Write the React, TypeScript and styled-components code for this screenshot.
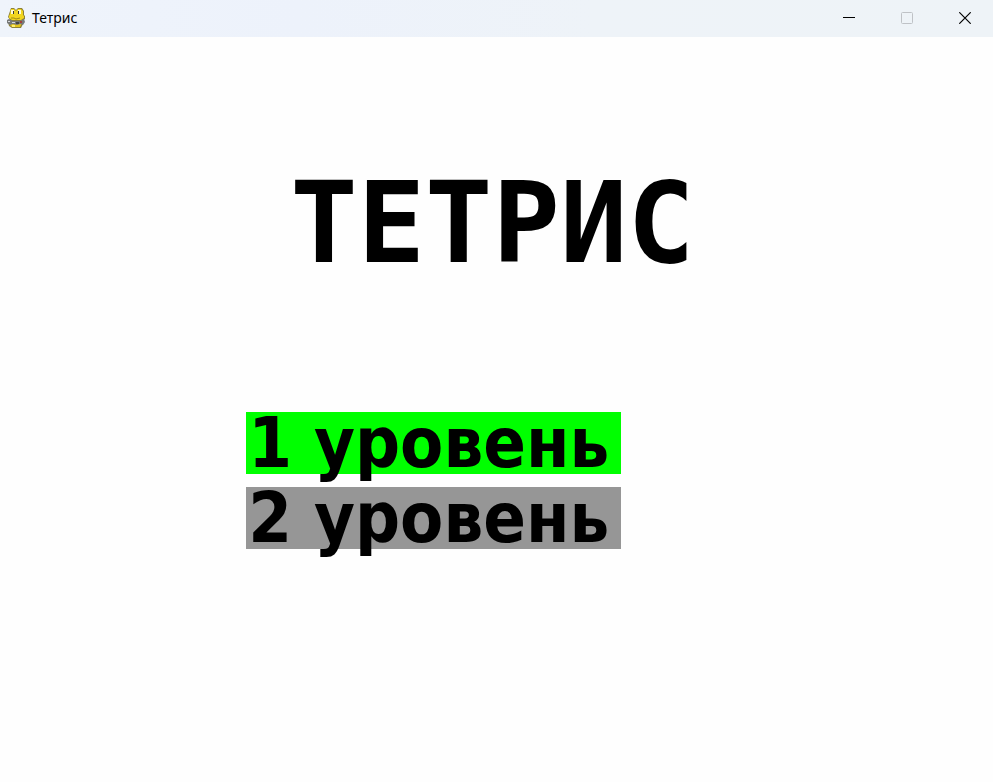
import React from "react";
import styled, { createGlobalStyle } from "styled-components";

const GlobalStyle = createGlobalStyle`
  *, *::before, *::after { box-sizing: border-box; }
  html, body { margin: 0; background: #fefefe; }
`;

const AppWindow = styled.div`
  display: flex;
  flex-direction: column;
  min-height: 100vh;
  background: #fefefe;
  color: #000;
`;

const TitleBar = styled.header`
  display: flex;
  align-items: center;
  height: 37px;
  padding: 0 0 2px 6px;
  background: linear-gradient(90deg, #eff4fb 0%, #edf2fb 30%, #eef3f8 60%, #eef3f7 100%);
`;

const WindowName = styled.span`
  flex: 1;
  padding-left: 6px;
  font: 14px/20px "Noto Sans", "Open Sans", sans-serif;
`;

const WindowControls = styled.div`
  display: flex;
`;

const WindowButton = styled.button`
  display: flex;
  align-items: center;
  justify-content: center;
  width: 58px;
  height: 35px;
  padding: 0 0 0 2px;
  border: 0;
  background: transparent;
  color: #000;

  &:disabled { color: #bfc2c6; }
  &:not(:disabled):hover { background: #dde3e9; }
`;

const Menu = styled.main`
  display: flex;
  flex-direction: column;
  padding-top: 122px;
`;

const GameTitle = styled.h1`
  margin: 0;
  padding-right: 8px;
  text-align: center;
  font: bold 112px/128px "DejaVu Sans Mono", monospace;
`;

const Levels = styled.nav`
  display: flex;
  flex-direction: column;
  align-items: flex-start;
  gap: 13px;
  margin: 125px 0 0 24.8%;
`;

const LevelButton = styled.button<{ $color: string }>`
  width: 375px;
  height: 62px;
  padding: 0 0 0 2px;
  border: 0;
  background: ${({ $color }) => $color};
  color: #000;
  text-align: left;
  white-space: nowrap;
  font: bold 70px/62px "DejaVu Sans Condensed", "DejaVu Sans", sans-serif;
  cursor: pointer;
`;

const SnakeIcon = () => (
  <svg width="20" height="22" viewBox="0 0 20 22" aria-hidden="true">
    <path d="M5 1h3l2 2 2-2h4l2 3v4l1 1v3l-3 2 1 3-2 4H6l-3-2-1-4 2-2-2-3 1-3z" fill="#8d8137" />
    <path d="M5 2h3l2 2 2-2h3l2 2v4l1 1v2l-3 2H6l-3-2V9l1-2z" fill="#f1d51f" />
    <path d="M4 14h11l1 2-2 4H6l-2-2z" fill="#e4c51b" />
    <path d="M5 3h3v4H5zM12 3h3v4h-3z" fill="#fffbd5" />
    <path d="M7 4h1v3H7zM12 4h1v3h-1z" fill="#343434" />
    <path d="M5 11h3l2 1 4-1" fill="none" stroke="#a08a16" />
    <path d="M1 13l2-1 4 2h7l4-2 1 3-2 3-3-1-3 1-4-1-3 1-3-2z" fill="#777a79" />
    <path d="M2 14h2v1H2zM6 15h3v1H6z" fill="#d4d6d8" />
    <path d="M14 14h2v2h-2z" fill="#a43e39" />
    <path d="M10 15h3v2h-3z" fill="#454545" />
    <path d="M6 18h3v2H6z" fill="#fff071" />
  </svg>
);

const MinimizeIcon = () => (
  <svg width="12" height="12" viewBox="0 0 12 12" aria-hidden="true">
    <path d="M0 5.5h12" stroke="currentColor" />
  </svg>
);

const MaximizeIcon = () => (
  <svg width="12" height="12" viewBox="0 0 12 12" aria-hidden="true">
    <rect x=".5" y=".5" width="11" height="11" rx="1" fill="none" stroke="currentColor" />
  </svg>
);

const CloseIcon = () => (
  <svg width="12" height="12" viewBox="0 0 12 12" aria-hidden="true">
    <path d="M.3.3l11.4 11.4M11.7.3L.3 11.7" stroke="currentColor" strokeWidth="1.2" />
  </svg>
);

const levels = [
  { name: "1 уровень", color: "#00ff00" },
  { name: "2 уровень", color: "#969696" },
];

export default function App() {
  return (
    <AppWindow>
      <GlobalStyle />
      <TitleBar>
        <SnakeIcon />
        <WindowName>Тетрис</WindowName>
        <WindowControls>
          <WindowButton aria-label="Свернуть"><MinimizeIcon /></WindowButton>
          <WindowButton aria-label="Развернуть" disabled><MaximizeIcon /></WindowButton>
          <WindowButton aria-label="Закрыть"><CloseIcon /></WindowButton>
        </WindowControls>
      </TitleBar>
      <Menu>
        <GameTitle>ТЕТРИС</GameTitle>
        <Levels>
          {levels.map(({ name, color }) => (
            <LevelButton key={name} $color={color}>{name}</LevelButton>
          ))}
        </Levels>
      </Menu>
    </AppWindow>
  );
}
